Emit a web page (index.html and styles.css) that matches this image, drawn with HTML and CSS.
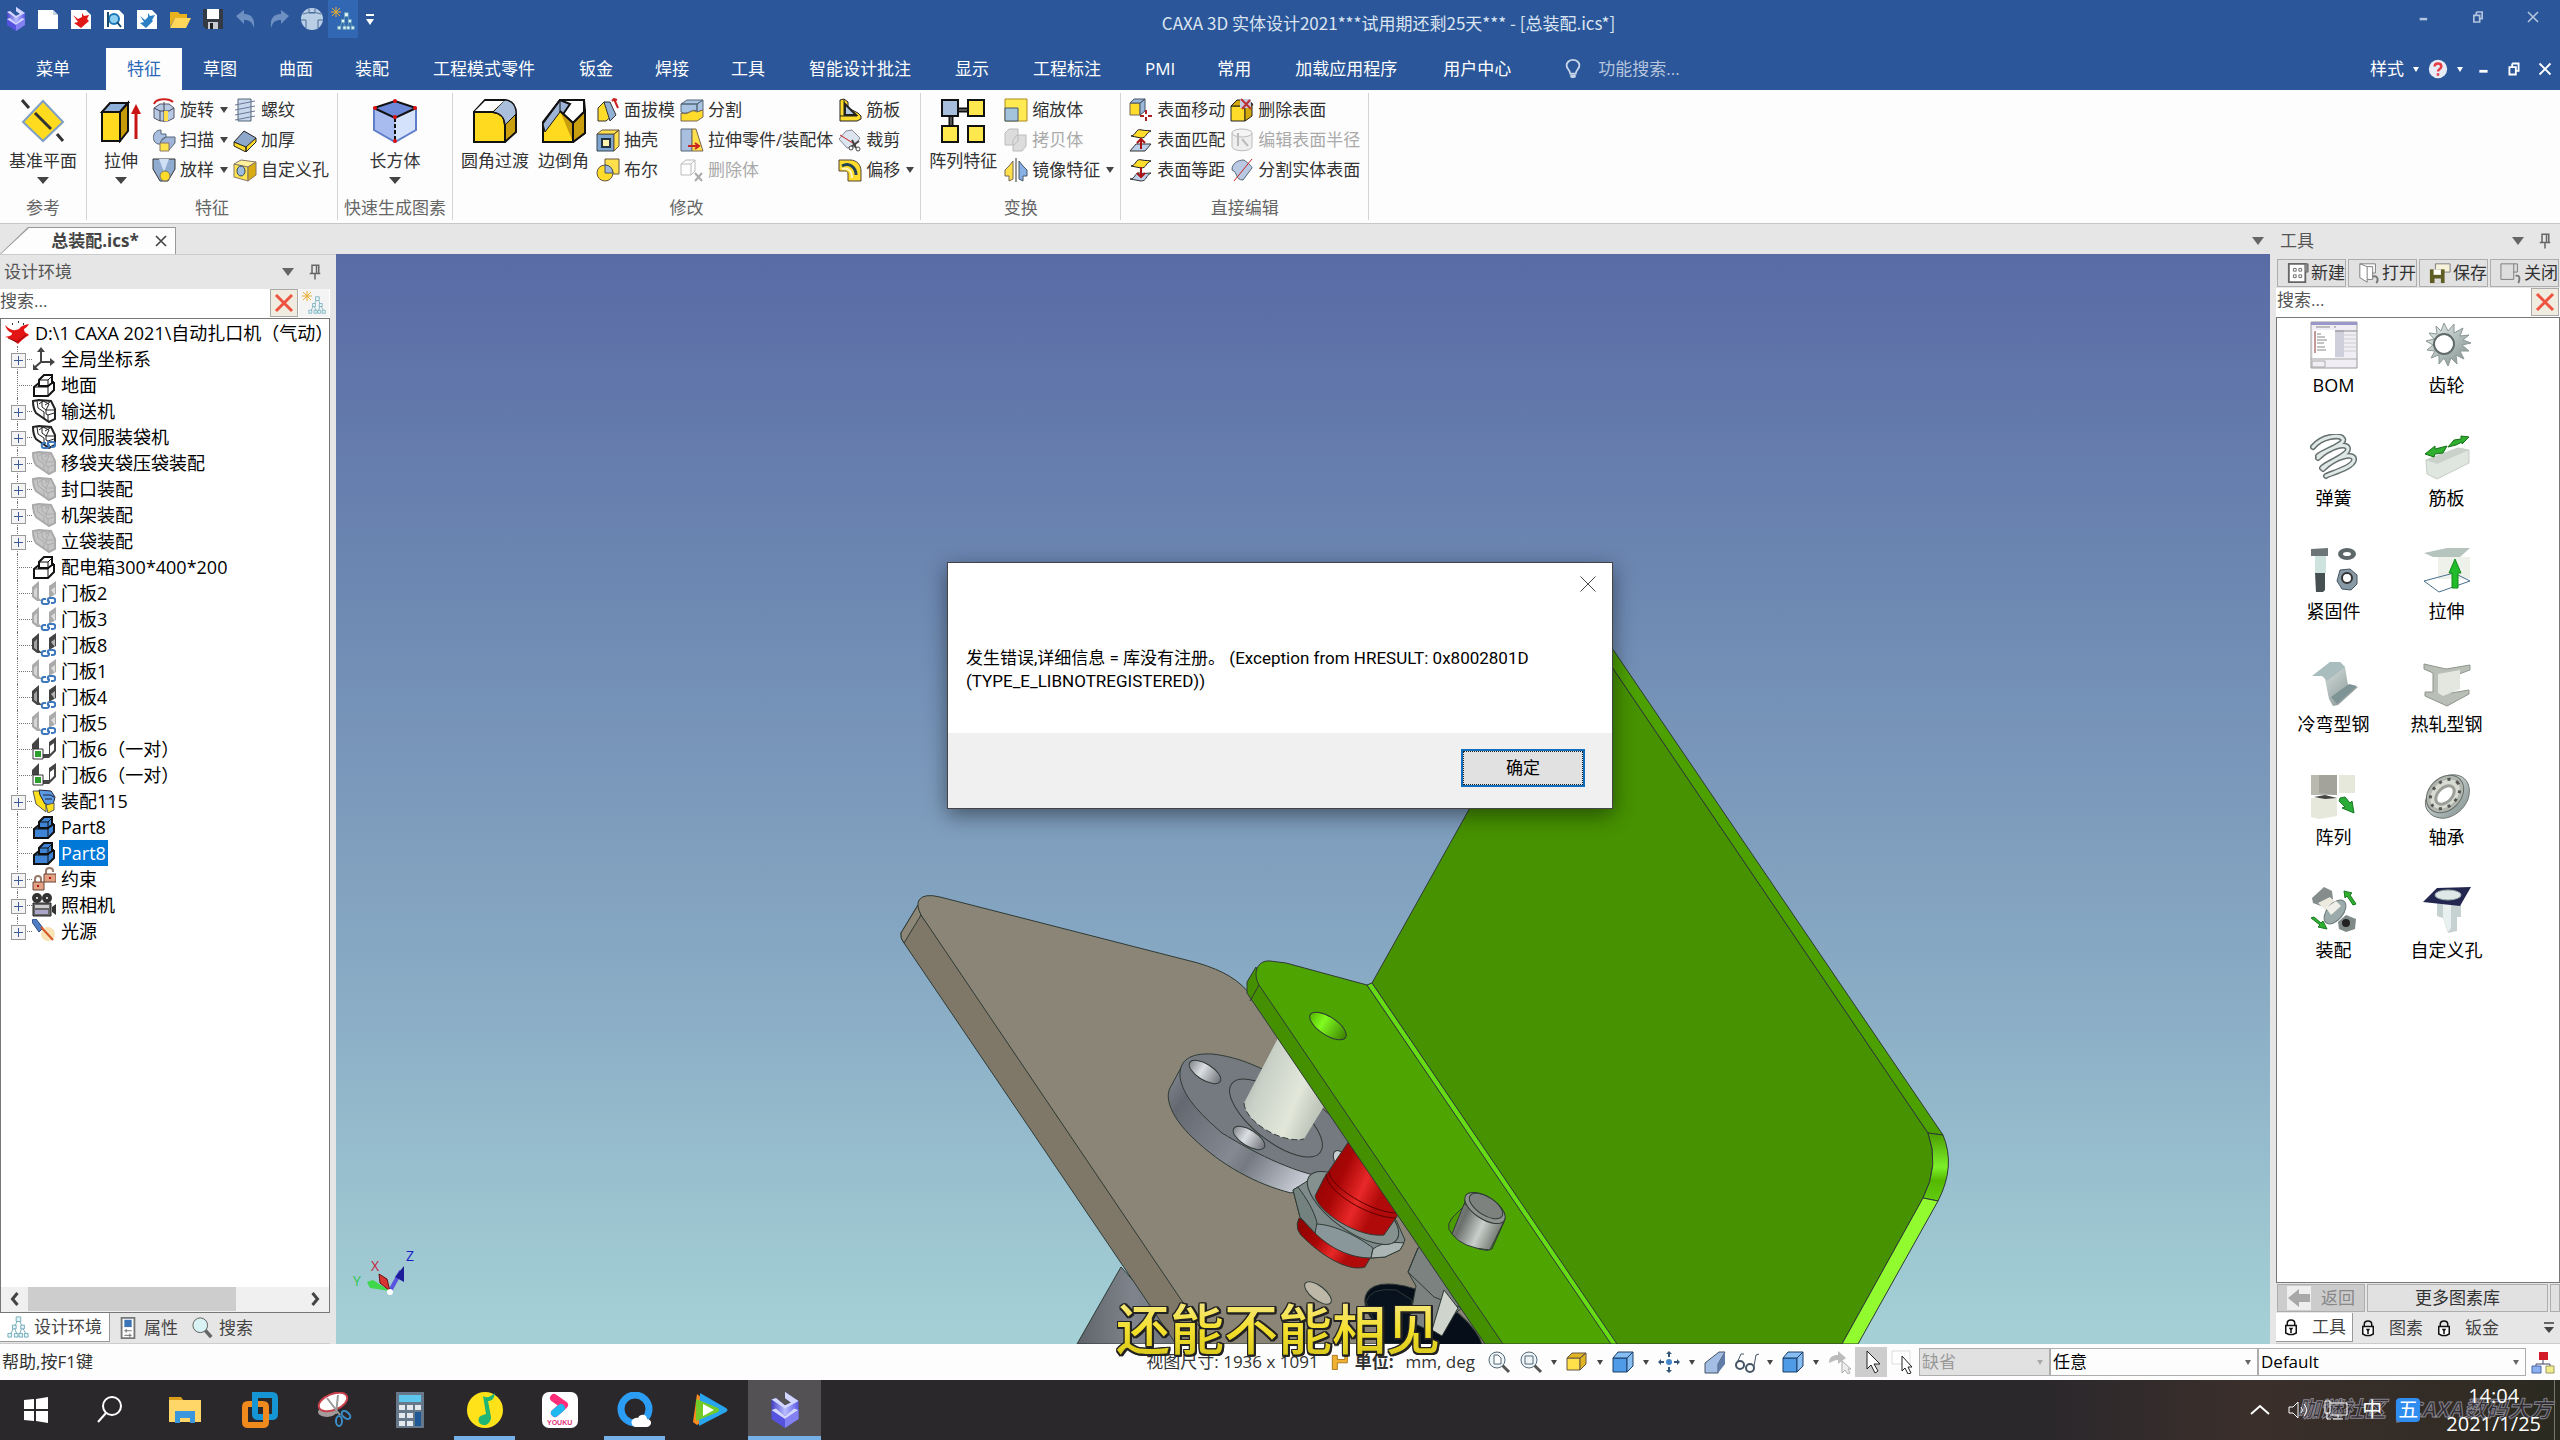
FILE: index.html
```html
<!DOCTYPE html>
<html lang="zh-CN">
  <head>
    <meta charset="UTF-8" />
    <meta name="viewport" content="width=device-width, initial-scale=1.0" />
    <title>CAXA 3D 实体设计2021</title>
    <link rel="stylesheet" href="styles.css">
  </head>
  <body>
    <!-- icon sprite -->
    <svg class="sprite" aria-hidden="true">
      <defs>
        <linearGradient id="steel" x1="0" y1="0" x2="1" y2="1"><stop offset="0" stop-color="#eef3f1"/><stop offset=".5" stop-color="#b4c0be"/><stop offset="1" stop-color="#7f8b8a"/></linearGradient>
        <linearGradient id="logoBlue" x1="0" y1="0" x2="1" y2="0"><stop offset="0" stop-color="#4340c8"/><stop offset=".5" stop-color="#b9bcff"/><stop offset="1" stop-color="#5a58e6"/></linearGradient>

        <symbol id="i-logo" viewBox="0 0 24 24"><path d="M3 5l3-1 6 5 4-2-4-3V0l9 6v6l-9 5-9-6z" fill="url(#logoBlue)"/><path d="M3 5l3-1 6 5 4-2-4-3V0l9 6-9 5z" fill="#d3d6ff"/><path d="M3 12l3-1 6 5 6-5 3 1v6l-9 6-9-6z" fill="#5552e0"/><path d="M3 12l3-1 6 5 6-5 3 1-9 6z" fill="#d3d6ff"/><path d="M12 18l9-6v6l-9 6z" fill="#8380f2"/></symbol>
        <symbol id="i-page" viewBox="0 0 24 24"><path d="M2 3h15l5 5v14H2z" fill="#fff"/><path d="M17 3v5h5" fill="#c9d4e4"/></symbol>
        <symbol id="i-page-red" viewBox="0 0 24 24"><path d="M2 3h15l5 5v14H2z" fill="#fff"/><path d="M4 8l5 4 4-2V6l2 3 5-1-2 4 2 2-8 7-7-5 4-1z" fill="#e01818"/></symbol>
        <symbol id="i-page-view" viewBox="0 0 24 24"><path d="M2 3h15l5 5v14H2z" fill="#fff"/><circle cx="12" cy="12" r="5" fill="#8fd0f0" stroke="#1c78b8" stroke-width="2"/><path d="M6 5v15M15 15l4 5" stroke="#18496e" stroke-width="2"/></symbol>
        <symbol id="i-page-blue" viewBox="0 0 24 24"><path d="M2 3h15l5 5v14H2z" fill="#fff"/><path d="M5 9l5 4 3-3V6l2 3 5-1-3 5 1 1-7 7-6-5 4-1z" fill="#2b7fc4"/></symbol>
        <symbol id="i-open" viewBox="0 0 24 24"><path d="M2 5h8l2 2h7v4H7l-5 9z" fill="#e8b21e"/><path d="M7 11h16l-5 10H2z" fill="#ffd75a"/></symbol>
        <symbol id="i-save" viewBox="0 0 24 24"><path d="M2 2h20v20H5l-3-3z" fill="#333a44"/><path d="M6 2h12v10H6z" fill="#fff"/><path d="M7 15h10v7H7z" fill="#c8ccd2"/><path d="M9 16h3v6H9z" fill="#222"/></symbol>
        <symbol id="i-undo" viewBox="0 0 24 24"><path d="M2 9l8-6v4c8 0 11 5 10 14-2-6-4-8-10-8v4z" fill="#6e8fc2"/></symbol>
        <symbol id="i-redo" viewBox="0 0 24 24"><path d="M22 9l-8-6v4C6 7 3 12 4 21c2-6 4-8 10-8v4z" fill="#6e8fc2"/></symbol>
        <symbol id="i-globe" viewBox="0 0 24 24"><circle cx="12" cy="12" r="11" fill="#b9cfe6"/><path d="M3 7c6-2 12-2 18 0M1 13h5v4M23 13h-5v4M6 17v4M18 17v4M9 2v4h6V2" fill="none" stroke="#4d6c94"/></symbol>
        <symbol id="i-nodes" viewBox="0 0 24 24"><path d="M12 4L8 12M13 4l4 8M7 13l-3 7M8 13l3 7M16 13l-2 7M17 13l4 7" stroke="#6fa9b8" fill="none"/><path d="M10 1h5v5h-5zM6 10h4v4H6zM15 10h4v4h-4zM1 19h4v4H1zM8 19h4v4H8zM13 19h4v4h-4zM19 19h4v4h-4z" fill="#e4f6f8" stroke="#6fa9b8"/></symbol>
        <symbol id="i-nodes-new" viewBox="0 0 24 24"><use href="#i-nodes" x="6" y="4" width="18" height="20"/><path d="M5 0v10M0 5h10M1 1l8 8M9 1L1 9" stroke="#e8ae30"/></symbol>
        <symbol id="i-min" viewBox="0 0 24 24"><path d="M8 13h9v3H8z" fill="currentColor"/></symbol>
        <symbol id="i-restore" viewBox="0 0 24 24"><path d="M10 6h7v8h-3M10 9V6M7 10h7v8H7z" fill="none" stroke="currentColor" stroke-width="2"/></symbol>
        <symbol id="i-x" viewBox="0 0 24 24"><path d="M6 6l12 12M18 6L6 18" stroke="currentColor" stroke-width="2"/></symbol>
        <symbol id="i-bulb" viewBox="0 0 24 24"><path d="M9 17c0-4-4-5-4-9a7 6 0 0 1 14 0c0 4-4 5-4 9z" fill="none" stroke="#c9d6ea" stroke-width="2"/><path d="M9 18h6v3l-3 1-3-1z" fill="#c9d6ea"/></symbol>
        <symbol id="i-help" viewBox="0 0 24 24"><circle cx="12" cy="12" r="11" fill="#e7ecf6"/><path d="M8 9c0-5 8-5 8 0 0 3-4 3-4 6m0 2v3" fill="none" stroke="#e63c46" stroke-width="3"/></symbol>

        <symbol id="i-plane" viewBox="0 0 44 44"><path d="M22 2l20 21-20 19L2 23z" fill="#ffdb20" stroke="#7f9fc4" stroke-width="2"/><path d="M1 1l7 8M14 14l16 16M36 35l6 7" stroke="#333" stroke-width="3"/></symbol>
        <symbol id="i-extrude" viewBox="0 0 44 44"><path d="M3 13h18v29H3z" fill="#ffda1f" stroke="#111" stroke-width="2"/><path d="M3 13l8-9h18l-8 9z" fill="#8fb0d8" stroke="#111" stroke-width="2"/><path d="M21 13l8-9v28l-8 10z" fill="#c79a08" stroke="#111" stroke-width="2"/><path d="M37 40V14" stroke="#c81414" stroke-width="3"/><path d="M32 15l5-10 5 10z" fill="#c81414"/></symbol>
        <symbol id="i-box3d" viewBox="0 0 44 44"><path d="M1 9l21 10v24L1 31z" fill="#a9bcf0"/><path d="M43 9L22 19v24l21-12z" fill="#d4e2fb"/><path d="M1 9l21-7 21 7-21 10z" fill="#6c8ad8" stroke="#111" stroke-width="2"/><path d="M1 9v22l21 12 21-12V9" fill="none" stroke="#5d7dc8" stroke-width="2"/><path d="M22 19v23" stroke="#111" stroke-width="2" stroke-dasharray="4 2"/><g fill="#e01010"><circle cx="2" cy="9" r="2"/><circle cx="42" cy="9" r="2"/><circle cx="22" cy="2" r="2"/><circle cx="22" cy="18" r="2"/><circle cx="22" cy="42" r="2"/></g></symbol>
        <symbol id="i-fillet" viewBox="0 0 44 44"><path d="M1 13h19c8 1 12 6 12 13v17H1z" fill="#ffda1f" stroke="#111" stroke-width="2"/><path d="M1 13L12 1h20c8 1 11 7 11 14v18L32 43V26c0-7-4-12-12-13z" fill="#c99f10" stroke="#111" stroke-width="2"/><path d="M20 13L32 1c8 1 11 7 11 14L32 26c0-7-4-12-12-13z" fill="#a9bfdc" stroke="#111"/><path d="M2 12L12 2h19L20 12z" fill="#fff"/></symbol>
        <symbol id="i-chamfer" viewBox="0 0 44 44"><path d="M1 23L18 1h24l1 11v22L31 43H1z" fill="#ffda1f" stroke="#111" stroke-width="2"/><path d="M18 1h24v12L31 24 18 12z" fill="#fff" stroke="#111" stroke-width="2"/><path d="M1 24L18 1l10 4-15 22-12 5z" fill="#9db4d6" stroke="#111" stroke-width="2"/><path d="M2 32l16-20 12 13v17H2z" fill="#ffda1f"/><path d="M1 25L18 2v11L3 33z" fill="#9db4d6" stroke="#111"/><path d="M18 12l13 12v19M31 24l12-12v22L31 43z" fill="#c99f10" stroke="#111" stroke-width="2"/></symbol>
        <symbol id="i-array" viewBox="0 0 44 44"><path d="M10 11h22M10 11v22" stroke="#111" stroke-width="5"/><path d="M10 11h22M10 11v22" stroke="#999" stroke-width="1"/><path d="M1 1h16v16H1z" fill="#a8bedd" stroke="#111" stroke-width="2"/><path d="M27 1h16v16H27zM1 27h16v16H1zM27 27h16v16H27z" fill="#ffe84e" stroke="#111" stroke-width="2"/></symbol>

        <symbol id="i-revolve" viewBox="0 0 24 24"><path d="M2 10l6-4h9l5 4v10l-6 3H8l-6-3z" fill="#b8c9e4" stroke="#556"/><path d="M2 10l6 3h9l5-3M8 13v10M12 4v20" fill="none" stroke="#445"/><path d="M12 13v10h4V13z" fill="#ffe04a"/><path d="M2 6c2-6 15-6 19-2" fill="none" stroke="#c22" stroke-width="2"/></symbol>
        <symbol id="i-sweep" viewBox="0 0 24 24"><path d="M9 2C0 2-1 14 6 16h4v-5l4-2v-3H9z" fill="#a8bfdf" stroke="#567"/><path d="M8 14l6-5h9v6l-6 7z" fill="#9fb4d8" stroke="#567"/><path d="M8 15h9v8H8z" fill="#ffe34d" stroke="#876"/></symbol>
        <symbol id="i-loft" viewBox="0 0 24 24"><path d="M1 1h22v10l-7 12H8L1 11z" fill="#8fabd0" stroke="#333"/><path d="M7 1h10l-5 13z" fill="#cfe0f4"/><circle cx="13" cy="18" r="5" fill="#ffdc2a" stroke="#776"/></symbol>
        <symbol id="i-thread" viewBox="0 0 24 24"><path d="M5 1h13v22H5z" fill="#c8d6ec" stroke="#567"/><path d="M2 7l20-4M2 12l20-4M2 17l20-4M2 22l20-4" stroke="#6a7896"/></symbol>
        <symbol id="i-thicken" viewBox="0 0 24 24"><path d="M1 14L11 3l12 7-10 10z" fill="#8ea8cc" stroke="#222"/><path d="M1 14v4l12 6v-5zM13 19v5l10-10v-4z" fill="#ffdc2a" stroke="#222"/></symbol>
        <symbol id="i-hole" viewBox="0 0 24 24"><path d="M1 6l14 3v14L1 19z" fill="#ffe450" stroke="#876"/><path d="M1 6l7-4 15 2-8 5z" fill="#fff09a" stroke="#876"/><path d="M15 9l8-5v13l-8 6z" fill="#d8ac10" stroke="#876"/><ellipse cx="8" cy="13" rx="4" ry="5" fill="#9dbce0" stroke="#345"/></symbol>
        <symbol id="i-draft" viewBox="0 0 24 24"><path d="M2 10l6-6 4 1 5 12-7 6H2z" fill="#ffdc2a" stroke="#333"/><path d="M8 4h6l6 13-6 6z" fill="#92b0d4" stroke="#333"/><path d="M18 1l4 9M16 3l2-2 3 1" fill="none" stroke="#c22" stroke-width="2"/></symbol>
        <symbol id="i-shell" viewBox="0 0 24 24"><path d="M1 6h17v17H1z" fill="#7fa6cf" stroke="#345"/><path d="M1 6l5-4h17l-5 4zM18 6l5-4v16l-5 5z" fill="#ffe04a" stroke="#654"/><path d="M6 11h8v8H6z" fill="#fff3b0" stroke="#234" stroke-width="2"/></symbol>
        <symbol id="i-bool" viewBox="0 0 24 24"><path d="M9 1h14v15H9z" fill="#ffe04a" stroke="#654"/><circle cx="9" cy="15" r="8" fill="#ffdc2a" stroke="#654"/><path d="M9 7a8 8 0 0 1 8 8H9z" fill="#a0b6da" stroke="#456"/></symbol>
        <symbol id="i-split" viewBox="0 0 24 24"><path d="M1 6l6-4h16l-6 4zM1 6h16v7c-6-3-8 5-16 1zM17 6l6-4v10l-6 2z" fill="#a9c3e2" stroke="#567"/><path d="M1 15c8 3 10-5 16-1l6-2v7l-6 4H1z" fill="#ffdc2a" stroke="#765"/></symbol>
        <symbol id="i-stretch" viewBox="0 0 24 24"><path d="M1 1h11v22H1z" fill="#a8bfdf" stroke="#567"/><path d="M12 1h4l7 22H12z" fill="#ffe04a" stroke="#765"/><path d="M8 18h10m-3-3l4 3-4 3" fill="none" stroke="#c22" stroke-width="2"/></symbol>
        <symbol id="i-delbody" viewBox="0 0 24 24"><path d="M1 6l5-4h9v11l-4 4H1zM1 6h10l4-4M11 6v11" fill="none" stroke="#bbb"/><path d="M15 15l7 8M22 15l-7 8" stroke="#aaa" stroke-width="2"/></symbol>
        <symbol id="i-rib" viewBox="0 0 24 24"><path d="M2 2l4-1 4 3v6l10 5 3 3v3l-4 2H2z" fill="#ffdc2a" stroke="#222"/><path d="M7 6l11 11H7z" fill="#b4c8e0" stroke="#222" stroke-width="2"/><path d="M2 18h17M6 2v16" fill="none" stroke="#222"/></symbol>
        <symbol id="i-trim" viewBox="0 0 24 24"><path d="M1 11l7-8 6-1 8 8-6 9-7 1z" fill="#dce4f0" stroke="#889"/><path d="M2 7l16 10" stroke="#c22"/><path d="M14 12l4 8M21 13l-8 6" stroke="#444" stroke-width="2"/><circle cx="13" cy="20" r="2" fill="#fff" stroke="#444"/><circle cx="20" cy="21" r="2" fill="#fff" stroke="#444"/></symbol>
        <symbol id="i-offset" viewBox="0 0 24 24"><path d="M1 2h11c7 0 11 5 11 11v10H10v-7c0-3-2-3-4-3H1z" fill="#ffdc2a" stroke="#543"/><path d="M4 8c7-4 14 1 14 9" fill="none" stroke="#245" stroke-width="3"/><path d="M4 11c6-2 10 2 10 9" fill="none" stroke="#fff6c0" stroke-width="2"/></symbol>
        <symbol id="i-scale" viewBox="0 0 24 24"><path d="M1 1h22v22H1z" fill="#ffea52" stroke="#aa8a20"/><path d="M1 10h13v13H1z" fill="#a4c4dc" stroke="#456"/></symbol>
        <symbol id="i-copybody" viewBox="0 0 24 24"><path d="M1 5l4-4h9v12l-4 4H1zM9 12l4-5h9v11l-4 5H9z" fill="#dcdcdc" stroke="#bbb"/></symbol>
        <symbol id="i-mirror" viewBox="0 0 24 24"><path d="M9 3v18l-4 2v-5H1v-6l4-4z" fill="#ffe04a" stroke="#765"/><path d="M15 3v18l4 2v-5h4v-6l-4-4z" fill="#88b0e4" stroke="#456"/><path d="M12 0v24" stroke="#333"/></symbol>
        <symbol id="i-fmove" viewBox="0 0 24 24"><path d="M1 5h10v12H1z" fill="#ffdc2a" stroke="#765"/><path d="M1 5l4-4h11l-5 4zM11 5l5-4v12l-5 4z" fill="#9bb8da" stroke="#456"/><path d="M17 12v4m0 3v4m-6-5h4m4 0h4" stroke="#a22" stroke-width="2"/></symbol>
        <symbol id="i-fmatch" viewBox="0 0 24 24"><path d="M2 8c6-1 4-8 11-6 4 1 7 0 9 1-6 2-4 7-10 7z" fill="#ffdc2a" stroke="#222"/><path d="M1 23l6-7h15l-6 7z" fill="#bccfea" stroke="#333"/><path d="M12 21v-9m-4 3l4-4 4 4" fill="none" stroke="#a11" stroke-width="2"/></symbol>
        <symbol id="i-foffset" viewBox="0 0 24 24"><path d="M2 8c6-1 4-8 11-6 4 1 7 0 9 1-6 2-4 7-10 7z" fill="#ffdc2a" stroke="#222"/><path d="M1 21c6 0 4-7 10-6 4 1 8 0 11 0-6 3-4 8-10 8z" fill="#bccfea" stroke="#333"/><path d="M12 9v9m-4-3l4 4 4-4" fill="none" stroke="#a11" stroke-width="2"/></symbol>
        <symbol id="i-fdel" viewBox="0 0 24 24"><path d="M1 8h14v15H1z" fill="#ffdc2a" stroke="#222"/><path d="M1 8l6-6h12l4 5-8 1zM15 8l7-3v13l-7 5z" fill="#d3a90c" stroke="#222"/><path d="M10 1h11v9H10z" fill="#c6cbe4"/><path d="M11 1l10 10M20 2l-8 9" stroke="#b33" stroke-width="2"/></symbol>
        <symbol id="i-fradius" viewBox="0 0 24 24"><path d="M2 5v14c2 5 18 5 20 0V5" fill="#eee" stroke="#bbb"/><ellipse cx="12" cy="5" rx="10" ry="4" fill="#f4f4f4" stroke="#bbb"/><path d="M8 5v13m4-7l6 7" stroke="#bbb" stroke-width="2"/></symbol>
        <symbol id="i-fsplit" viewBox="0 0 24 24"><path d="M2 12C2 5 8 2 14 2c5 4 8 6 8 8l-9 12C5 22 8 14 2 12z" fill="#b9c9e4" stroke="#567"/><path d="M22 1L4 23" stroke="#c22"/></symbol>

        <symbol id="t-root" viewBox="0 0 24 24"><path d="M0 4c6 6 10 6 14 4 2-3 5-4 10-5-2 4-5 4-5 6 1 4 4 3 5 5-5 3-8 6-11 9C9 20 4 16 0 16c6-1 7-2 7-4C4 11 1 8 0 4z" fill="#e31414"/><path d="M3 17l9 4 9-7" fill="none" stroke="#8c0c0c"/><path d="M7 3h1M13 1h1M18 3h1" stroke="#333" stroke-width="2"/></symbol>
        <symbol id="t-axis" viewBox="0 0 24 24"><path d="M9 3v12h12M9 15l-7 6" fill="none" stroke="#444" stroke-width="2"/><path d="M5 5l4-5 4 5zM18 11l5 4-5 4zM1 17v6h6z" fill="#444"/></symbol>
        <symbol id="t-part" viewBox="0 0 24 24"><path d="M2 14l5-4h15v7l-6 6H2z" fill="var(--fill,#fff)" stroke="#111" stroke-width="2"/><path d="M2 14h14v9M16 14l6-6" fill="none" stroke="#111"/><path d="M7 12V7l5-5h8v8l-4 3H7z" fill="var(--fill,#fff)" stroke="#111" stroke-width="2"/><path d="M7 7h9v6M16 7l4-4" fill="none" stroke="#111"/></symbol>
        <symbol id="t-asm" viewBox="0 0 24 24"><path d="M1 2l6-1 12 1 4 8v10l-6 3L4 14C2 11 1 8 1 2z" fill="var(--fill,#fff)" stroke="var(--line,#222)" stroke-width="2"/><path d="M5 2l1 7 6 4v6M10 2v6l4 3M7 5l4-3 6 3-3 6v4l2 1v6M14 11h8M13 6l5-3M16 16l6-2" fill="none" stroke="var(--line,#222)"/></symbol>
        <symbol id="t-asm-color" viewBox="0 0 24 24"><path d="M1 2h7l6 12v9L4 15z" fill="#ffe01e" stroke="#555"/><path d="M7 1l12 1 4 6-2 8-8-1-5-9z" fill="#5b9be6" stroke="#223"/><path d="M11 6h7l4 2M13 10h7" stroke="#223" fill="none"/><path d="M14 16l8-2v7l-6 3z" fill="#ffe01e" stroke="#555"/></symbol>
        <symbol id="t-link" viewBox="0 0 24 24"><path d="M14 18h-2c-3 0-3 5 0 5h3c3 0 2-4 0-4m4 3h2c3 0 3-5 0-5h-3c-3 0-3 4 0 4" fill="none" stroke="#3d78bd" stroke-width="2"/></symbol>
        <symbol id="t-door" viewBox="0 0 24 24"><path d="M0 6l7-6v17l3 3H5l-5-4z" fill="var(--fill,#aaa)"/><path d="M2 9l3-3v11l-3-2z" fill="#fff" opacity=".5"/><path d="M17 5l7-5v13l-7 4z" fill="var(--fill,#aaa)"/><path d="M19 9l4-3v8z" fill="#fff" opacity=".6"/></symbol>
        <symbol id="t-door6" viewBox="0 0 24 24"><path d="M0 7l7-7v12H0zM17 5l7-5v14l-7 7h-6v-4h6z" fill="#444"/><path d="M18 9l4-3v7l-4 4z" fill="#fff"/><path d="M1 12h10v10H1z" fill="#fff" stroke="#333"/><path d="M3 14h6v6H3z" fill="#2aa02a"/></symbol>
        <symbol id="t-lock" viewBox="0 0 24 24"><path d="M3 15v-3c0-4 6-4 6 0v3M14 7V4c0-4 7-4 7 0v1" fill="none" stroke="#9a7a6a" stroke-width="2"/><path d="M1 15h11v8H1zM12 7h12v8H12z" fill="#e2a182" stroke="#6a4436"/><path d="M6 18v2M18 10v2" stroke="#a11" stroke-width="2"/></symbol>
        <symbol id="t-cam" viewBox="0 0 24 24"><circle cx="5" cy="5" r="5" fill="#333"/><circle cx="15" cy="5" r="5" fill="#333"/><circle cx="5" cy="5" r="1" fill="#fff"/><circle cx="15" cy="5" r="1" fill="#fff"/><path d="M1 10h18v13H1z" fill="#666" stroke="#222"/><path d="M3 12h14v3H3z" fill="#ccc"/><path d="M3 17h13v4H3z" fill="#a9a6c8"/><path d="M20 14l4-3v11l-4-3z" fill="#333"/></symbol>
        <symbol id="t-light" viewBox="0 0 24 24"><path d="M1 0l3 0 7 9-4 4L0 3z" fill="#4d7ec6" stroke="#2c4a80"/><circle cx="16" cy="15" r="7" fill="#f7e3b6"/><path d="M9 8l12 13" stroke="#d4572c" stroke-width="2"/></symbol>

        <symbol id="i-pin" viewBox="0 0 24 24"><path d="M8 3h9v11H8zM5 14h14M12 14v8M14 4v9" fill="none" stroke="#666" stroke-width="2"/></symbol>
        <symbol id="i-prop" viewBox="0 0 24 24"><path d="M5 1h14v22H5z" fill="#fff" stroke="#777" stroke-width="2"/><path d="M8 3h8v8H8z" fill="#3c74b8"/><path d="M8 15h8m-8 5h8m-6-7v4m4 1v4" stroke="#666"/></symbol>
        <symbol id="i-find" viewBox="0 0 24 24"><path d="M14 14l7 8" stroke="#666" stroke-width="4"/><circle cx="9" cy="9" r="8" fill="#d9f3f5" stroke="#555"/></symbol>
        <symbol id="i-redx" viewBox="0 0 24 24"><path d="M4 4l16 16M20 4L4 20" stroke="#ee5340" stroke-width="3"/></symbol>
        <symbol id="i-padlock" viewBox="0 0 24 24"><path d="M7 11V7c0-6 10-6 10 0v4" fill="none" stroke="#111" stroke-width="2"/><path d="M5 10h14v10l-4 2H9l-4-2z" fill="#fff" stroke="#111" stroke-width="2"/><path d="M9 13h6l-2 3v4h-2v-4z" fill="#111"/></symbol>
        <symbol id="i-back" viewBox="0 0 24 24"><path d="M0 0h24v24H0z" fill="#eee"/><path d="M1 12L12 3v5h11v8H12v5z" fill="#a8a8a8"/></symbol>
        <symbol id="b-new" viewBox="0 0 24 24"><path d="M2 2h18v20H2z" fill="#fff" stroke="#666" stroke-width="2"/><path d="M19 2h4v9h-3" fill="#888" stroke="#666"/><path d="M7 7h3v3H7zM13 7h3v3h-3zM7 14h3v3H7zM13 14h3v3h-3z" fill="none" stroke="#666"/></symbol>
        <symbol id="b-open" viewBox="0 0 24 24"><path d="M2 2l8 3v17l-8-5zM10 5h6v14h-6M2 2h17v10h-3" fill="#fff" stroke="#777"/><path d="M16 16c5-2 7 3 4 7" fill="none" stroke="#777" stroke-width="2"/></symbol>
        <symbol id="b-save" viewBox="0 0 24 24"><path d="M7 2h16v9H7z" fill="#f6f3dc" stroke="#777"/><path d="M1 8h16v15H1z" fill="#5d5d24"/><path d="M5 8h8v6H5z" fill="#fff"/><path d="M6 18h7v5H6z" fill="#ddd"/></symbol>
        <symbol id="b-close" viewBox="0 0 24 24"><path d="M1 2h14v17H1zM15 2h4v9h-4" fill="#ddd" stroke="#777"/><path d="M17 15c5-1 5 3 3 8" fill="none" stroke="#777" stroke-width="2"/></symbol>

        <symbol id="s-ruler" viewBox="0 0 24 24"><path d="M4 4h6v5h9V4h3v9H10v8H4z" fill="#f0b030" stroke="#a06a10"/></symbol>
        <symbol id="s-zoom" viewBox="0 0 24 24"><path d="M15 15l7 7" stroke="#555" stroke-width="3"/><circle cx="10" cy="10" r="8" fill="#eef6f8" stroke="#567"/><path d="M7 5h4l3 3v6H7z" fill="#fff" stroke="#567"/></symbol>
        <symbol id="s-zoom-win" viewBox="0 0 24 24"><path d="M15 15l7 7" stroke="#555" stroke-width="3"/><circle cx="10" cy="10" r="8" fill="#eef6f8" stroke="#567"/><path d="M6 6h8v8H6z" fill="none" stroke="#567"/></symbol>
        <symbol id="s-cube-y" viewBox="0 0 24 24"><path d="M2 8h13v12H2z" fill="#ffe04a" stroke="#654"/><path d="M2 8l5-5h14l-6 5zM15 8l6-5v11l-6 6z" fill="#e0b423" stroke="#654"/></symbol>
        <symbol id="s-cube" viewBox="0 0 24 24"><path d="M2 8h14v14H2z" fill="#4f9be8" stroke="#1c3d66"/><path d="M2 8l5-6h15l-6 6zM16 8l6-6v14l-6 6z" fill="#86bdf2" stroke="#1c3d66"/></symbol>
        <symbol id="s-move" viewBox="0 0 24 24"><circle cx="12" cy="12" r="3" fill="#4488cc"/><path d="M12 4v3M4 12h3M17 12h3M12 17v3" stroke="#357" stroke-width="2"/><path d="M9 4l3-3 3 3zM9 20l3 3 3-3zM4 9l-3 3 3 3zM20 9l3 3-3 3z" fill="#357"/></symbol>
        <symbol id="s-wedge" viewBox="0 0 24 24"><path d="M2 13L16 2h6L15 14v9H2z" fill="#a3bde4" stroke="#456"/><path d="M15 14l7-12v12l-7 9z" fill="#5f7ca8"/></symbol>
        <symbol id="s-glass" viewBox="0 0 24 24"><circle cx="5" cy="15" r="4" fill="none" stroke="#456" stroke-width="2"/><circle cx="15" cy="18" r="4" fill="none" stroke="#456" stroke-width="2"/><path d="M2 13L6 4l3 0M19 16l2-11 3-1" fill="none" stroke="#456"/></symbol>
        <symbol id="s-rot" viewBox="0 0 24 24"><path d="M2 13c0-7 5-8 9-8V1l8 7-8 6v-4c-4 0-6 2-9 3z" fill="#bbb"/><path d="M15 11v12l3-3 3 4 2-1-2-4h3z" fill="#eee" stroke="#aaa"/></symbol>
        <symbol id="s-arrow" viewBox="0 0 24 24"><path d="M8 1v18l4-4 4 8 3-2-4-7h6z" fill="#fff" stroke="#222"/></symbol>
        <symbol id="s-pick" viewBox="0 0 24 24"><path d="M1 1h18v13H1z" fill="#fff" stroke="#ddd"/><path d="M11 6v15l3-3 3 6 3-1-3-6h4z" fill="#fff" stroke="#222"/></symbol>
        <symbol id="s-tree" viewBox="0 0 24 24"><path d="M12 10v4M5 17v-3h14v3" fill="none" stroke="#446"/><path d="M8 2h9v8H8z" fill="#d21a28"/><path d="M1 16h9v7H1z" fill="#8fb0ee" stroke="#46a"/><path d="M15 16h8v7h-8z" fill="#f2ec8a" stroke="#996"/></symbol>
      </defs>
    </svg>

    <header class="titlebar">
      <div class="quick">
        <button class="app-logo" aria-label="CAXA"><svg class="i24"><use href="#i-logo"/></svg></button>
        <button aria-label="新建"><svg class="i24"><use href="#i-page"/></svg></button>
        <button aria-label="新建设计"><svg class="i24"><use href="#i-page-red"/></svg></button>
        <button aria-label="新建图纸"><svg class="i24"><use href="#i-page-view"/></svg></button>
        <button aria-label="模板"><svg class="i24"><use href="#i-page-blue"/></svg></button>
        <button aria-label="打开"><svg class="i24"><use href="#i-open"/></svg></button>
        <button aria-label="保存"><svg class="i24"><use href="#i-save"/></svg></button>
        <button aria-label="撤销"><svg class="i24"><use href="#i-undo"/></svg></button>
        <button aria-label="重做"><svg class="i24"><use href="#i-redo"/></svg></button>
        <button aria-label="三维球"><svg class="i24"><use href="#i-globe"/></svg></button>
        <button class="lit" aria-label="设计树"><svg class="i24"><use href="#i-nodes-new"/></svg></button>
        <button class="more" aria-label="更多"><i class="bar"></i><i class="tri"></i></button>
      </div>
      <h1>CAXA 3D 实体设计2021***试用期还剩25天*** - [总装配.ics*]</h1>
      <div class="win-ctl">
        <button aria-label="最小化"><svg class="i24"><use href="#i-min"/></svg></button>
        <button aria-label="还原"><svg class="i24"><use href="#i-restore"/></svg></button>
        <button aria-label="关闭"><svg class="i24"><use href="#i-x"/></svg></button>
      </div>
    </header>

    <nav class="tabs">
      <button class="menu">菜单</button>
      <button class="active">特征</button>
      <button>草图</button>
      <button>曲面</button>
      <button>装配</button>
      <button class="long">工程模式零件</button>
      <button>钣金</button>
      <button>焊接</button>
      <button>工具</button>
      <button class="long">智能设计批注</button>
      <button>显示</button>
      <button class="long">工程标注</button>
      <button>PMI</button>
      <button>常用</button>
      <button class="long">加载应用程序</button>
      <button class="long">用户中心</button>
      <label class="cmd-search"><svg class="i22"><use href="#i-bulb"/></svg><input type="text" placeholder="功能搜索..." aria-label="功能搜索" /></label>
      <div class="tabs-right">
        <button>样式<i class="tri"></i></button>
        <button aria-label="帮助"><svg class="i20"><use href="#i-help"/></svg><i class="tri"></i></button>
        <button aria-label="最小化文档"><svg class="i24"><use href="#i-min"/></svg></button>
        <button aria-label="还原文档"><svg class="i24"><use href="#i-restore"/></svg></button>
        <button aria-label="关闭文档"><svg class="i24"><use href="#i-x"/></svg></button>
      </div>
    </nav>

    <section class="ribbon">
      <div class="group first">
        <div class="tools">
          <button class="big"><svg><use href="#i-plane"/></svg>基准平面<i class="tri"></i></button>
        </div>
        <h2>参考</h2>
      </div>
      <div class="group wide">
        <div class="tools">
          <button class="big"><svg><use href="#i-extrude"/></svg>拉伸<i class="tri"></i></button>
          <div class="col">
            <button><svg><use href="#i-revolve"/></svg>旋转<i class="tri"></i></button>
            <button><svg><use href="#i-sweep"/></svg>扫描<i class="tri"></i></button>
            <button><svg><use href="#i-loft"/></svg>放样<i class="tri"></i></button>
          </div>
          <div class="col">
            <button><svg><use href="#i-thread"/></svg>螺纹</button>
            <button><svg><use href="#i-thicken"/></svg>加厚</button>
            <button><svg><use href="#i-hole"/></svg>自定义孔</button>
          </div>
        </div>
        <h2>特征</h2>
      </div>
      <div class="group">
        <div class="tools">
          <button class="big"><svg><use href="#i-box3d"/></svg>长方体<i class="tri"></i></button>
        </div>
        <h2>快速生成图素</h2>
      </div>
      <div class="group">
        <div class="tools">
          <button class="big"><svg><use href="#i-fillet"/></svg>圆角过渡</button>
          <button class="big"><svg><use href="#i-chamfer"/></svg>边倒角</button>
          <div class="col">
            <button><svg><use href="#i-draft"/></svg>面拔模</button>
            <button><svg><use href="#i-shell"/></svg>抽壳</button>
            <button><svg><use href="#i-bool"/></svg>布尔</button>
          </div>
          <div class="col">
            <button><svg><use href="#i-split"/></svg>分割</button>
            <button><svg><use href="#i-stretch"/></svg>拉伸零件/装配体</button>
            <button disabled><svg><use href="#i-delbody"/></svg>删除体</button>
          </div>
          <div class="col">
            <button><svg><use href="#i-rib"/></svg>筋板</button>
            <button><svg><use href="#i-trim"/></svg>裁剪</button>
            <button><svg><use href="#i-offset"/></svg>偏移<i class="tri"></i></button>
          </div>
        </div>
        <h2>修改</h2>
      </div>
      <div class="group">
        <div class="tools">
          <button class="big"><svg><use href="#i-array"/></svg>阵列特征</button>
          <div class="col">
            <button><svg><use href="#i-scale"/></svg>缩放体</button>
            <button disabled><svg><use href="#i-copybody"/></svg>拷贝体</button>
            <button><svg><use href="#i-mirror"/></svg>镜像特征<i class="tri"></i></button>
          </div>
        </div>
        <h2>变换</h2>
      </div>
      <div class="group wide">
        <div class="tools">
          <div class="col">
            <button><svg><use href="#i-fmove"/></svg>表面移动</button>
            <button><svg><use href="#i-fmatch"/></svg>表面匹配</button>
            <button><svg><use href="#i-foffset"/></svg>表面等距</button>
          </div>
          <div class="col">
            <button><svg><use href="#i-fdel"/></svg>删除表面</button>
            <button disabled><svg><use href="#i-fradius"/></svg>编辑表面半径</button>
            <button><svg><use href="#i-fsplit"/></svg>分割实体表面</button>
          </div>
        </div>
        <h2>直接编辑</h2>
      </div>
    </section>

    <main class="work">
      <div class="docs">
        <div class="doc-tabs">
          <button class="doc-tab"><b>总装配.ics*</b><svg class="i20"><use href="#i-x"/></svg></button>
          <button class="doc-list" aria-label="文档列表"><i class="tri"></i></button>
        </div>

        <div class="doc-body">
          <aside class="panel left">
            <div class="panel-head">设计环境<i class="tri"></i><svg class="i18"><use href="#i-pin"/></svg></div>
            <div class="search">
              <input type="text" placeholder="搜索..." aria-label="搜索设计树" />
              <button class="clear" aria-label="清除"><svg class="i24"><use href="#i-redx"/></svg></button>
              <button class="opt" aria-label="过滤"><svg class="i24"><use href="#i-nodes-new"/></svg></button>
            </div>
            <div class="tree-box">
              <div class="root"><svg class="i24"><use href="#t-root"/></svg>D:\1 CAXA 2021\自动扎口机（气动）</div>
              <ul class="tree">
                <li class="exp"><svg class="i24"><use href="#t-axis"/></svg><span>全局坐标系</span></li>
                <li><svg class="i24"><use href="#t-part"/></svg><span>地面</span></li>
                <li class="exp"><svg class="i24"><use href="#t-asm"/></svg><span>输送机</span></li>
                <li class="exp"><svg class="i24"><use href="#t-asm"/><use href="#t-link"/></svg><span>双伺服装袋机</span></li>
                <li class="exp"><svg class="i24 dim"><use href="#t-asm"/></svg><span>移袋夹袋压袋装配</span></li>
                <li class="exp"><svg class="i24 dim"><use href="#t-asm"/></svg><span>封口装配</span></li>
                <li class="exp"><svg class="i24 dim"><use href="#t-asm"/></svg><span>机架装配</span></li>
                <li class="exp"><svg class="i24 dim"><use href="#t-asm"/></svg><span>立袋装配</span></li>
                <li><svg class="i24"><use href="#t-part"/></svg><span>配电箱300*400*200</span></li>
                <li><svg class="i24"><use href="#t-door"/><use href="#t-link"/></svg><span>门板2</span></li>
                <li><svg class="i24"><use href="#t-door"/><use href="#t-link"/></svg><span>门板3</span></li>
                <li><svg class="i24 dark"><use href="#t-door"/><use href="#t-link"/></svg><span>门板8</span></li>
                <li><svg class="i24"><use href="#t-door"/><use href="#t-link"/></svg><span>门板1</span></li>
                <li><svg class="i24 dark"><use href="#t-door"/><use href="#t-link"/></svg><span>门板4</span></li>
                <li><svg class="i24"><use href="#t-door"/><use href="#t-link"/></svg><span>门板5</span></li>
                <li><svg class="i24"><use href="#t-door6"/></svg><span>门板6（一对）</span></li>
                <li><svg class="i24"><use href="#t-door6"/></svg><span>门板6（一对）</span></li>
                <li class="exp"><svg class="i24"><use href="#t-asm-color"/></svg><span>装配115</span></li>
                <li><svg class="i24 blue"><use href="#t-part"/></svg><span>Part8</span></li>
                <li class="selected"><svg class="i24 blue"><use href="#t-part"/></svg><span>Part8</span></li>
                <li class="exp"><svg class="i24"><use href="#t-lock"/></svg><span>约束</span></li>
                <li class="exp"><svg class="i24"><use href="#t-cam"/></svg><span>照相机</span></li>
                <li class="exp"><svg class="i24"><use href="#t-light"/></svg><span>光源</span></li>
              </ul>
              <div class="hscroll">
                <svg viewBox="0 0 24 24"><path d="M15 6l-5 6 5 6" fill="none" stroke="#444" stroke-width="3"/></svg>
                <div class="track"><div class="thumb"></div></div>
                <svg viewBox="0 0 24 24"><path d="M9 6l5 6-5 6" fill="none" stroke="#444" stroke-width="3"/></svg>
              </div>
            </div>
            <div class="panel-tabs">
              <button class="active"><svg class="i22"><use href="#i-nodes"/></svg>设计环境</button>
              <button><svg class="i22"><use href="#i-prop"/></svg>属性</button>
              <button><svg class="i22"><use href="#i-find"/></svg>搜索</button>
            </div>
          </aside>

          <div class="viewport">
            <svg class="scene" viewBox="336 254 1934 1090" preserveAspectRatio="xMinYMin slice">
              <defs>
                <linearGradient id="rod" x1="0" y1="0" x2="1" y2=".5"><stop offset="0" stop-color="#9aa19c"/><stop offset=".35" stop-color="#c9d0c6"/><stop offset=".75" stop-color="#e2e7da"/><stop offset="1" stop-color="#c0c6ba"/></linearGradient>
                <linearGradient id="rim" x1="0" y1="0" x2="1" y2=".6"><stop offset="0" stop-color="#8b9098"/><stop offset=".2" stop-color="#646971"/><stop offset=".6" stop-color="#858a92"/><stop offset=".7" stop-color="#747982"/><stop offset="1" stop-color="#c4c8d0"/></linearGradient>
                <linearGradient id="hole" x1="0" y1="0" x2="1" y2="0"><stop offset="0" stop-color="#85898f"/><stop offset=".4" stop-color="#dcdfe2"/><stop offset="1" stop-color="#6e7278"/></linearGradient>
                <linearGradient id="holeG" x1="0" y1="0" x2="1" y2="0"><stop offset="0" stop-color="#57b800"/><stop offset=".35" stop-color="#80fb20"/><stop offset="1" stop-color="#3c8200"/></linearGradient>
                <linearGradient id="red" x1="0" y1="0" x2="1" y2=".5"><stop offset="0" stop-color="#8a0000"/><stop offset=".4" stop-color="#a80606"/><stop offset=".65" stop-color="#e82828"/><stop offset=".85" stop-color="#b00a0a"/></linearGradient>
                <linearGradient id="pinG" x1="0" y1="0" x2="1" y2=".4"><stop offset="0" stop-color="#888c88"/><stop offset=".3" stop-color="#6b706c"/><stop offset=".65" stop-color="#c9cfca"/><stop offset="1" stop-color="#6f746f"/></linearGradient>
                <linearGradient id="corner" x1="0" y1="0" x2="0" y2="1"><stop offset="0" stop-color="#4a9c00"/><stop offset=".5" stop-color="#7df02a"/><stop offset=".7" stop-color="#55b800"/><stop offset="1" stop-color="#62cc10"/></linearGradient>
                <linearGradient id="tube" x1="0" y1="0" x2="1" y2="0"><stop offset="0" stop-color="#5f646b"/><stop offset=".5" stop-color="#80858d"/><stop offset="1" stop-color="#666b73"/></linearGradient>
              </defs>
              <g stroke="#2f3a35" stroke-width="1" stroke-linejoin="round">
                <!-- mounting plate -->
                <path d="M1121 1267L1077 1344H1190z" fill="url(#tube)"/>
                <path d="M918 905L901 933Q900 938 904 943L1176 1344H1230L921 915z" fill="#7f7869"/>
                <path d="M918 905L901 933Q900 938 904 943L921 915z" fill="#8d8777"/>
                <path d="M921 915Q916 905 919 900Q924 893 940 897L1198 963C1224 971 1240 980 1253 998L1500 1344H1211z" fill="#8a8576"/>
                <!-- flange and rod -->
                <path d="M1182 1066L1170 1088C1164 1100 1174 1120 1192 1137C1222 1166 1256 1184 1291 1193L1330 1178L1230 1060z" fill="url(#rim)"/>
                <path d="M1180 1077C1179 1060 1190 1053 1212 1054C1240 1057 1264 1068 1300 1090L1360 1140L1328 1178C1290 1172 1250 1150 1222 1133C1198 1112 1183 1096 1180 1077z" fill="#757a81"/>
                <ellipse cx="1276" cy="1118" rx="56" ry="23" transform="rotate(38 1276 1118)" fill="#777c83"/>
                <ellipse cx="1205" cy="1072" rx="18" ry="8" transform="rotate(32 1205 1072)" fill="url(#hole)"/>
                <ellipse cx="1249" cy="1138" rx="18" ry="8" transform="rotate(32 1249 1138)" fill="url(#hole)"/>
                <ellipse cx="1343" cy="1164" rx="15" ry="7" transform="rotate(60 1343 1164)" fill="#c9ccd0"/>
                <path d="M1278 1038L1244 1103C1245 1122 1282 1144 1304 1139L1326 1103V1050z" fill="url(#rod)" stroke="none"/>
                <path d="M1244 1103C1245 1122 1282 1144 1304 1139" fill="none" stroke-dasharray="6 3"/>
                <ellipse cx="1318" cy="1293" rx="16" ry="7" transform="rotate(38 1318 1293)" fill="#bdb7a8"/>
                <!-- red push button with nut -->
                <path d="M1299 1218Q1293 1230 1306 1240C1325 1258 1350 1272 1365 1267L1372 1255z" fill="url(#red)"/>
                <path d="M1293 1190L1309 1180L1360 1190L1396 1220L1405 1240L1400 1250L1385 1257L1371 1258L1315 1233L1300 1217z" fill="#7f8a8a"/>
                <path d="M1315 1224C1335 1224 1360 1238 1373 1248L1371 1258C1350 1258 1330 1248 1315 1233z" fill="#89979a"/>
                <path d="M1293 1190L1298 1187C1306 1198 1314 1210 1317 1223L1315 1233L1300 1217z" fill="#74827f"/>
                <path d="M1373 1249C1382 1242 1396 1242 1404 1243L1400 1250L1385 1257L1371 1258z" fill="#aab5b4"/>
                <ellipse cx="1353" cy="1208" rx="54" ry="22" transform="rotate(36 1353 1208)" fill="#84918f"/>
                <path d="M1349 1141L1324 1178L1315 1196C1318 1212 1358 1238 1384 1235L1400 1212V1180z" fill="url(#red)"/>
                <path d="M1326 1174C1326 1192 1370 1218 1396 1218M1329 1172C1330 1186 1370 1212 1396 1213" fill="none" stroke="#5c0000"/>
                <!-- second bolt over black knob -->
                <ellipse cx="1424" cy="1326" rx="66" ry="30" transform="rotate(30 1424 1326)" fill="#050e19"/>
                <path d="M1366 1302Q1370 1287 1396 1290L1412 1300V1344H1384z" fill="#07121e"/>
                <path d="M1418 1248L1408 1272L1416 1286L1410 1318Q1424 1335 1440 1325L1462 1308L1490 1300L1450 1240z" fill="#7b827f"/>
                <path d="M1418 1248L1408 1272L1434 1297L1462 1308" fill="none"/>
                <path d="M1444 1290L1432 1330L1442 1336L1458 1308z" fill="#cfd5cd"/>
                <!-- green bracket -->
                <path d="M1372 983L1575 620L1614 670L1928 1133Q1940 1165 1923 1198L1842 1344H1616z" fill="#469200"/>
                <path d="M1600 630L1614 651L1943 1135L1928 1133L1614 670L1596 643z" fill="#4ca000"/>
                <path d="M1928 1133L1943 1135Q1956 1166 1938 1201L1923 1198Q1940 1165 1928 1133z" fill="url(#corner)"/>
                <path d="M1923 1198L1938 1201L1858 1344H1842z" fill="#92fb30"/>
                <path d="M1256 967L1247 982V993L1485 1344H1510L1264 985z" fill="#449000"/>
                <path d="M1259 985L1250 1001" fill="none"/>
                <path d="M1259 985C1252 972 1258 960 1270 961L1286 963L1367 985L1612 1344H1503z" fill="#4ea400"/>
                <path d="M1367 985L1372 983L1617 1344H1611z" fill="#66dc14"/>
                <ellipse cx="1328" cy="1026" rx="21" ry="9" transform="rotate(33 1328 1026)" fill="url(#holeG)"/>
                <!-- pin -->
                <path d="M1466 1196L1464 1206L1452 1218Q1442 1230 1460 1240Q1484 1254 1492 1249L1504 1222V1212z" fill="#4a9c00"/>
                <path d="M1464 1204L1452 1234Q1462 1248 1490 1250L1505 1219z" fill="url(#pinG)"/>
                <ellipse cx="1485" cy="1208" rx="23" ry="11" transform="rotate(33 1485 1208)" fill="#8e938f"/>
                <ellipse cx="1486" cy="1206" rx="19" ry="9" transform="rotate(33 1486 1206)" fill="#7d827f"/>
              </g>
              <!-- axis triad -->
              <path d="M390 1291L401 1271" stroke="#5a55e0" stroke-width="4"/>
              <path d="M404 1266l-9 11 9 5z" fill="#1e1e9a"/>
              <path d="M390 1291l-20-3-3-6 6-2z" fill="#3fd84a"/>
              <path d="M390 1291l-10-8-1-9 8 5z" fill="#d83434" stroke="#6a1010"/>
              <circle cx="390" cy="1292" r="3" fill="#fff"/>
              <g class="axis-text">
                <text x="406" y="1261" fill="#1c1cc8">Z</text>
                <text x="371" y="1271" fill="#c81c3c">X</text>
                <text x="353" y="1286" fill="#2fc84a">Y</text>
              </g>
            </svg>
          </div>
        </div>
      </div>

      <aside class="panel right">
        <div class="panel-head">工具<i class="tri"></i><svg class="i18"><use href="#i-pin"/></svg></div>
        <div class="lib-bar">
          <button><svg class="i22"><use href="#b-new"/></svg>新建</button>
          <button><svg class="i22"><use href="#b-open"/></svg>打开</button>
          <button><svg class="i22"><use href="#b-save"/></svg>保存</button>
          <button><svg class="i22"><use href="#b-close"/></svg>关闭</button>
        </div>
        <div class="search">
          <input type="text" placeholder="搜索..." aria-label="搜索图素" />
          <button class="clear" aria-label="清除"><svg class="i24"><use href="#i-redx"/></svg></button>
        </div>
        <div class="lib">
          <button><svg viewBox="0 0 48 48"><path d="M1 1h46v46H1z" fill="#f0eef4" stroke="#999"/><path d="M1 1h46v3H1z" fill="#9a98c8"/><path d="M3 9h22v28H3z" fill="#fff"/><path d="M25 9h9v27h-9z" fill="#cfcfdc"/><path d="M34 14h13M34 18h13M34 22h13M34 26h13M34 30h13" stroke="#ccc"/><path d="M25 10h22M6 6h14M24 6h2M7 13h4M7 16h8M7 19h10M7 22h7M7 26h8M7 29h9" stroke="#888"/><path d="M5 10v22" stroke="#833"/><path d="M1 38h46M2 40h13v6H2z" fill="none" stroke="#aaa"/></svg>BOM</button>
          <button><svg viewBox="0 0 48 48"><path d="M18 10l3-8 4 8 6-7 0 9 9-5-3 8 9-1-6 5 8 3-9 2 7 6-9 0 4 8-8-4 1 9-6-6-3 8-4-8-5 6 0-9-8 3 4-7-8-1 6-5-7-4 8-2-5-6 8 1-1-8z" fill="url(#steel)" stroke="#8a9694"/><circle cx="21" cy="23" r="10" fill="#fff" stroke="#5f6a69" stroke-width="2"/></svg>齿轮</button>
          <button><svg viewBox="0 0 48 48" fill="none" stroke-linecap="round"><path d="M3 13C12 2 30 0 33 5S12 18 8 22M8 24C20 12 38 8 38 15S14 30 12 34M13 35C26 22 45 18 44 26S18 40 16 42" stroke="#65706f" stroke-width="6"/><path d="M3 13C12 2 30 0 33 5S12 18 8 22M8 24C20 12 38 8 38 15S14 30 12 34M13 35C26 22 45 18 44 26S18 40 16 42" stroke="#dfe8e6" stroke-width="3"/></svg>弹簧</button>
          <button><svg viewBox="0 0 48 48"><path d="M3 26l32-12 11 2v13L14 45 4 40z" fill="#dfe5df" stroke="#c5ccc5"/><path d="M3 26l11 4 32-14-11-2z" fill="#c9d1ca"/><path d="M2 20l10-8v3l12-3-4 7-8 1-1 3zM25 13l6-7 7-1V2l8 1-7 7V8l-6 3z" fill="#2fae2f" stroke="#167016"/></svg>筋板</button>
          <button><svg viewBox="0 0 48 48"><path d="M1 2l17-1v8H1z" fill="#6d7676"/><path d="M5 9h11v17H5z" fill="#cfe3de"/><path d="M5 26h10v17l-2 2H6z" fill="#465052"/><ellipse cx="37" cy="7" rx="9" ry="6" fill="#5d6668"/><ellipse cx="37" cy="7" rx="4" ry="2" fill="#fff"/><path d="M30 23l10-1 7 6v9l-6 6-9-1-5-8z" fill="#8799a4" stroke="#465663"/><circle cx="37" cy="31" r="5" fill="#fff" stroke="#333" stroke-width="2"/></svg>紧固件</button>
          <button><svg viewBox="0 0 48 48"><path d="M15 10h32v22H15z" fill="#eef1ea"/><path d="M1 6l23-5h23l-10 9H10z" fill="#b5c4bd"/><path d="M1 34l30-8 16 8-31 11z" fill="none" stroke="#47708c"/><path d="M29 41V26h-3l6-14 6 14h-3v15z" fill="#21bb2c" stroke="#128a1a"/></svg>拉伸</button>
          <button><svg viewBox="0 0 48 48"><path d="M2 16L20 2h10l5 5 3 18 10 2-20 18-5 1-4-7-4-20-5-4z" fill="url(#steel)"/><path d="M2 16L20 2h10l5 5-18 14-4-5z" fill="#a9bdbf"/><path d="M21 37l18-13 8 2-20 18z" fill="#7f9496"/></svg>冷弯型钢</button>
          <button><svg viewBox="0 0 48 48"><path d="M1 4l22 5 24-4v5L28 17v16l18-3v4L24 46 2 36v-4l8 0V13L1 9z" fill="#b9bfb6" stroke="#8f968c"/><path d="M15 14l22-4v19l-17 7-5-3z" fill="#e3e7df"/></svg>热轧型钢</button>
          <button><svg viewBox="0 0 48 48"><path d="M1 2h26v20H1z" fill="#b9b9b0"/><path d="M9 2h18v20l-18-2z" fill="#a3a39c"/><path d="M29 2h16v18H29zM1 25h26v18l-18 3-8-2z" fill="#e6e8db"/><path d="M4 24l11-2 12 3-12 1z" fill="#444"/><path d="M30 25l5-1 5 6 2-2 2 12-12-5 3-1-6-6z" fill="#2bab38" stroke="#177a20"/></svg>阵列</button>
          <button><svg viewBox="0 0 48 48"><path d="M33 2c9 1 15 9 13 20C44 36 28 47 17 45 8 44 0 36 3 26 7 12 20 0 33 2z" fill="url(#steel)" stroke="#6f7670"/><ellipse cx="22" cy="21" rx="21" ry="16" transform="rotate(-45 22 21)" fill="#b1b6ae" stroke="#656c66"/><ellipse cx="22" cy="21" rx="17" ry="12" transform="rotate(-45 22 21)" fill="#d7dbd2" stroke="#555" stroke-width="3" stroke-dasharray="3 6"/><ellipse cx="22" cy="22" rx="11" ry="7" transform="rotate(-45 22 22)" fill="#fff" stroke="#9aa098" stroke-width="3"/></svg>轴承</button>
          <button><svg viewBox="0 0 48 48"><path d="M2 12L14 1l8 4 1 8-12 7-8-3z" fill="#858c8c"/><path d="M8 17l12-6 12 12-9 8z" fill="#ece9df"/><ellipse cx="25" cy="26" rx="8" ry="14" transform="rotate(40 25 26)" fill="#9baaaa" stroke="#6b7878"/><path d="M16 22l10-7 5 5-10 9z" fill="#f0efe8"/><path d="M28 36l8-7 10 4-1 10-9 3-7-3z" fill="#7f8988"/><circle cx="36" cy="37" r="4" fill="#222"/><path d="M34 5l8 2-2 2 6 9-3 1-6-9-2 2zM1 32l3-1 7 6 2-2 4 8-9-2 2-2z" fill="#2fae2f" stroke="#177a20"/></svg>装配</button>
          <button><svg viewBox="0 0 48 48"><path d="M14 16h24v15l-4 0v14l-9 2-5-15-6-2z" fill="#c6d1d1"/><path d="M20 18h8v24l-3 4-5-14z" fill="#e8f0f0"/><path d="M14 2l34-1-11 19-37-4z" fill="#23264f"/><ellipse cx="25" cy="9" rx="13" ry="5" fill="#dfe8e6" stroke="#9aa"/></svg>自定义孔</button>
        </div>
        <div class="lib-foot">
          <button class="back" disabled><svg class="i24"><use href="#i-back"/></svg>返回</button>
          <button class="more-lib">更多图素库</button>
          <button class="stub" aria-label="展开"></button>
        </div>
        <div class="panel-tabs">
          <button class="active"><svg class="i18"><use href="#i-padlock"/></svg>工具</button>
          <button><svg class="i18"><use href="#i-padlock"/></svg>图素</button>
          <button><svg class="i18"><use href="#i-padlock"/></svg>钣金</button>
          <button class="more" aria-label="更多图素"><i class="bar"></i><i class="tri"></i></button>
        </div>
      </aside>
    </main>

    <footer class="status">
      <span class="hint">帮助,按F1键</span>
      <span class="dims">视图尺寸: 1936 x 1091</span>
      <span class="units"><svg class="i20"><use href="#s-ruler"/></svg><b>单位:</b></span>
      <span class="unit-val">mm, deg</span>
      <div class="view-tools">
        <button aria-label="缩放"><svg class="i24"><use href="#s-zoom"/></svg></button>
        <button aria-label="窗口缩放"><svg class="i24"><use href="#s-zoom-win"/></svg><i class="tri"></i></button>
        <button aria-label="视向"><svg class="i24"><use href="#s-cube-y"/></svg><i class="tri"></i></button>
        <button aria-label="投影"><svg class="i24"><use href="#s-cube"/></svg><i class="tri"></i></button>
        <button aria-label="平移"><svg class="i24"><use href="#s-move"/></svg><i class="tri"></i></button>
        <button aria-label="剖视"><svg class="i24"><use href="#s-wedge"/></svg></button>
        <button aria-label="显示"><svg class="i24"><use href="#s-glass"/></svg><i class="tri"></i></button>
        <button aria-label="渲染"><svg class="i24"><use href="#s-cube"/></svg><i class="tri"></i></button>
        <button aria-label="旋转" disabled><svg class="i24"><use href="#s-rot"/></svg></button>
        <button aria-label="选择" class="pressed"><svg class="i24"><use href="#s-arrow"/></svg></button>
        <button aria-label="框选"><svg class="i24"><use href="#s-pick"/></svg></button>
      </div>
      <div class="combo c1"><select aria-label="拾取层" disabled><option>缺省</option></select><i class="tri"></i></div>
      <div class="combo c2"><select aria-label="拾取过滤"><option>任意</option></select><i class="tri"></i></div>
      <div class="combo c3"><select aria-label="配置"><option>Default</option></select><i class="tri"></i></div>
      <button class="cfg" aria-label="配置树"><svg class="i24"><use href="#s-tree"/></svg></button>
    </footer>

    <div class="taskbar">
      <div class="watermark">咖谜社区 | CAXA数码大方</div>
      <button class="start" aria-label="开始"><svg viewBox="0 0 36 36"><path d="M6 8l10-1v10H6zM18 7l12-2v12H18zM6 19h10v10L6 28zM18 19h12v12l-12-2z" fill="#fff"/></svg></button>
      <button aria-label="搜索"><svg viewBox="0 0 36 36"><circle cx="20" cy="14" r="9" fill="none" stroke="#fff" stroke-width="2"/><path d="M14 21L6 30" stroke="#fff" stroke-width="2"/></svg></button>
      <button aria-label="文件资源管理器"><svg viewBox="0 0 36 36"><path d="M2 5h12l3 4H2z" fill="#d99e1c"/><path d="M2 8h32v22H2z" fill="#ffd667"/><path d="M8 19h20v12h-5v-5H13v5H8z" fill="#3b97dd"/></svg></button>
      <button aria-label="VMware"><svg viewBox="0 0 36 36" fill="none" stroke-width="6"><path d="M13 3h17q3 0 3 3v16q0 3-3 3H16q-3 0-3-3z" stroke="#1595d3"/><path d="M6 12h15q3 0 3 3v15q0 3-3 3H6q-3 0-3-3V15q0-3 3-3z" stroke="#f08a1c"/><path d="M13 8v12" stroke="#1595d3"/></svg></button>
      <button aria-label="截图工具"><svg viewBox="0 0 36 36"><ellipse cx="10" cy="20" rx="9" ry="5" fill="#a59a9c"/><ellipse cx="16" cy="10" rx="15" ry="8" transform="rotate(-22 16 10)" fill="#fff" stroke="#c8404a" stroke-width="2"/><path d="M10 6l13 17M21 3l-2 19" stroke="#999" stroke-width="2"/><ellipse cx="22" cy="29" rx="3" ry="5" fill="none" stroke="#3a8fc8" stroke-width="2"/><ellipse cx="29" cy="23" rx="5" ry="3" transform="rotate(40 29 23)" fill="none" stroke="#3a8fc8" stroke-width="2"/></svg></button>
      <button aria-label="计算器"><svg viewBox="0 0 36 36"><path d="M4 0h28v36H4z" fill="#66788a"/><path d="M7 3h22v7H7z" fill="#5cc6ec"/><path d="M7 13h6v5H7zM15 13h6v5h-6zM23 13h6v5h-6zM7 21h6v5H7zM15 21h6v5h-6zM7 29h6v5H7zM15 29h6v5h-6z" fill="#e4e9ee"/><path d="M23 20h6v14h-6z" fill="#1f5a98"/></svg></button>
      <button class="run" aria-label="QQ音乐"><svg viewBox="0 0 36 36"><circle cx="18" cy="18" r="18" fill="#ffe21a"/><path d="M16 4c4 3 8 0 12-3-1 6-3 8-7 8l3 16c0 5-4 9-8 8-6-1-6-9 0-10l3-1z" fill="#1fb574"/></svg></button>
      <button aria-label="优酷"><svg viewBox="0 0 36 36"><rect width="36" height="36" rx="7" fill="#fff"/><path d="M12 6l10 7-9 8" fill="none" stroke="#ff2d7a" stroke-width="8" stroke-linejoin="round" stroke-linecap="round"/><path d="M13 21l6-5" stroke="#1fb9f0" stroke-width="8" stroke-linecap="round"/><text x="5" y="33" class="youku">YOUKU</text></svg></button>
      <button class="run" aria-label="QQ浏览器"><svg viewBox="0 0 36 36"><circle cx="18" cy="17" r="14" fill="none" stroke="#2c9df4" stroke-width="7"/><path d="M16 34c-4-5 1-9 5-8 2-5 9-4 9 1 6 1 5 7 0 8H18z" fill="#fff"/></svg></button>
      <button aria-label="腾讯视频"><svg viewBox="0 0 36 36"><path d="M5 2L1 30l4 3 20-14z" fill="#ff8a1e"/><path d="M8 1l-1 33 27-14q3-2 0-4z" fill="#29a5ee"/><path d="M4 7v22l22-9q2-2 0-4z" fill="#74ca28"/><path d="M11 12v12l11-6z" fill="#fff"/></svg></button>
      <button class="run current" aria-label="CAXA 3D"><svg viewBox="0 0 24 24"><use href="#i-logo"/></svg></button>
      <div class="tray">
        <svg viewBox="0 0 24 24"><path d="M3 16l9-8 9 8" fill="none" stroke="#fff" stroke-width="2"/></svg>
        <svg viewBox="0 0 24 24"><path d="M3 9h4l5-5v16l-5-5H3zM15 9q3 3 0 6M18 6q5 6 0 12" fill="none" stroke="#fff"/></svg>
        <svg viewBox="0 0 24 24"><path d="M6 5h17v12H6M1 3h5v12H1zM14 17v3M9 21h10M3 15v6h4" fill="none" stroke="#fff"/></svg>
        <span class="ime">中</span>
        <span class="wubi">五</span>
        <div class="clock"><time>14:04</time><time>2021/1/25</time></div>
      </div>
    </div>

    <div class="dialog" role="dialog" aria-label="错误">
      <div class="dialog-body">
        <button class="dialog-x" aria-label="关闭"><svg viewBox="0 0 24 24"><path d="M3 3l18 18M21 3L3 21" stroke="#222"/></svg></button>
        <p>发生错误,详细信息 = 库没有注册。 (Exception from HRESULT: 0x8002801D<br>(TYPE_E_LIBNOTREGISTERED))</p>
      </div>
      <div class="dialog-foot"><button>确定</button></div>
    </div>
    <div class="subtitle">还能不能相见</div>
  </body>
</html>
```
FILE: styles.css
```css
* {
  box-sizing: border-box;
}
body {
  margin: 0;
  height: 100vh;
  display: flex;
  flex-direction: column;
  overflow: hidden;
  font-family: "Open Sans", "Noto Sans CJK SC", sans-serif;
  font-size: 17px;
  line-height: 24px;
  color: #333;
  background: #e6e6e6;
}
button,
input,
select {
  font: inherit;
  color: inherit;
  margin: 0;
  padding: 0;
  border: 0;
  border-radius: 0;
  background: none;
}
button {
  display: flex;
  align-items: center;
  justify-content: center;
  white-space: nowrap;
}
h1,
h2,
p,
ul {
  margin: 0;
  padding: 0;
  font-size: 17px;
  font-weight: normal;
}
svg {
  display: block;
  flex: none;
}
.sprite {
  position: absolute;
  width: 0;
  height: 0;
}
.i18 { width: 18px; height: 18px; }
.i20 { width: 20px; height: 20px; }
.i22 { width: 22px; height: 22px; }
.i24 { width: 24px; height: 24px; }
.tri {
  border: 4px solid transparent;
  border-top: 6px solid #444;
  border-bottom: 0;
}
.bar {
  width: 8px;
  height: 2px;
  background: #fff;
}
.more {
  flex-direction: column;
  gap: 3px;
}

/* title bar */
.titlebar {
  display: flex;
  height: 48px;
  background: #2b579a;
  color: #dbe4f1;
}
.quick {
  display: flex;
  height: 38px;
}
.quick button {
  width: 33px;
}
.quick .app-logo {
  width: 31px;
}
.quick .lit {
  width: 30px;
  background: #3268b3;
}
.quick .more {
  width: 24px;
}
.quick .tri {
  border-top-color: #fff;
}
.titlebar h1 {
  flex: 1;
  text-align: center;
  line-height: 46px;
  font-family: "Noto Sans CJK SC", sans-serif;
}
.win-ctl {
  display: flex;
  height: 34px;
}
.win-ctl button {
  width: 55px;
  color: #b3c4de;
}
.win-ctl svg {
  width: 20px;
}

/* ribbon tabs */
.tabs {
  display: flex;
  height: 42px;
  background: #2b579a;
  color: #fff;
}
.tabs > button {
  padding: 0 21px;
}
.tabs > .long {
  padding: 0 23px;
}
.tabs > .menu {
  padding: 0 36px;
}
.tabs > .active {
  background: #fdfdfd;
  color: #2b67b8;
}
.cmd-search {
  display: flex;
  align-items: center;
  gap: 14px;
  padding-left: 28px;
}
.cmd-search input {
  width: 160px;
}
.cmd-search input::placeholder {
  color: #b5c4dc;
  opacity: 1;
}
.tabs-right {
  display: flex;
  gap: 9px;
  margin-left: auto;
  padding-right: 4px;
}
.tabs-right button {
  gap: 9px;
}
.tabs-right .tri {
  border-width: 5px 3px 0;
  border-top-color: #fff;
}
.tabs-right svg.i24 {
  width: 22px;
}

/* ribbon */
.ribbon {
  display: flex;
  height: 134px;
  background: #fdfdfd;
  border-bottom: 1px solid #c8c8c8;
}
.group {
  display: flex;
  flex-direction: column;
  padding: 0 6px;
  margin: 3px 0;
  border-right: 1px solid #d4d4d4;
}
.group.first {
  padding: 0 7px;
}
.group.wide {
  padding: 0 8px;
}
.tools {
  display: flex;
  justify-content: center;
  gap: 5px;
  height: 103px;
}
.group h2 {
  text-align: center;
  color: #666;
}
.big {
  flex-direction: column;
  justify-content: flex-start;
  min-width: 52px;
  padding: 6px 2px 0;
}
.big svg {
  width: 44px;
  height: 44px;
  margin-bottom: 6px;
}
.big .tri {
  border-width: 7px 6px 0;
  margin-top: 4px;
}
.col {
  display: flex;
  flex-direction: column;
  padding-top: 2px;
}
.col button {
  justify-content: flex-start;
  gap: 4px;
  height: 30px;
}
.col svg {
  width: 24px;
  height: 24px;
}
.col .tri {
  margin-left: 2px;
}
.col button:disabled {
  color: #aaa;
}

/* work area */
.work {
  flex: 1;
  display: flex;
  min-height: 0;
}
.docs {
  flex: 1;
  display: flex;
  flex-direction: column;
  min-width: 0;
}
.doc-tabs {
  display: flex;
  height: 30px;
  padding-top: 3px;
}
.doc-tab {
  position: relative;
  z-index: 0;
  width: 176px;
  padding-left: 46px;
  gap: 12px;
  color: #444;
  background: #999;
  clip-path: polygon(0 100%, 28px 0, 100% 0, 100% 100%);
}
.doc-tab::before {
  content: "";
  position: absolute;
  inset: 1px 1px 0 1px;
  z-index: -1;
  background: #fdfdfd;
  clip-path: polygon(0 100%, 28px 0, 100% 0, 100% 100%);
}
.doc-list {
  margin-left: auto;
  width: 25px;
}
.doc-list .tri,
.panel-head .tri {
  border-width: 8px 6px 0;
  border-top-color: #666;
}
.doc-body {
  flex: 1;
  display: flex;
  min-height: 0;
}
.panel {
  display: flex;
  flex-direction: column;
  background: #e6e6e6;
}
.panel.left {
  width: 336px;
  padding-right: 6px;
  border-top: 1px solid #ccc;
}
.panel.right {
  width: 290px;
  padding-left: 6px;
}
.panel-head {
  display: flex;
  align-items: center;
  gap: 12px;
  height: 34px;
  padding: 0 6px 0 4px;
  color: #555;
}
.panel-head .tri {
  margin-left: auto;
}
.search {
  display: flex;
  height: 29px;
  background: #fff;
}
.search input {
  flex: 1;
  min-width: 0;
  padding-bottom: 6px;
}
.search input::placeholder {
  color: #555;
  opacity: 1;
}
.search button {
  width: 28px;
  margin: 0 1px 1px 0;
}
.search .clear {
  background: #f0ede0;
  border: 1px solid #aaa;
}
.search .opt {
  width: 30px;
  background: #f4f4f4;
}
.tree-box {
  flex: 1;
  display: flex;
  flex-direction: column;
  min-height: 0;
  overflow: hidden;
  border: 1px solid #777;
  background: #fff;
  color: #000;
  font-size: 18px;
  line-height: 26px;
}
.root {
  display: flex;
  align-items: center;
  gap: 6px;
  height: 27px;
  padding: 1px 0 0 4px;
  white-space: nowrap;
  overflow: hidden;
}
.tree {
  list-style: none;
  font-size: 18px;
}
.tree li {
  position: relative;
  display: flex;
  align-items: center;
  height: 26px;
  padding-left: 31px;
}
/* dotted branch lines */
.tree li::before {
  content: "";
  position: absolute;
  left: 16px;
  top: 0;
  width: 14px;
  height: 13px;
  border-left: 1px dotted #777;
  border-bottom: 1px dotted #777;
}
.tree li:not(:last-child)::after {
  content: "";
  position: absolute;
  left: 16px;
  top: 13px;
  height: 13px;
  border-left: 1px dotted #777;
}
/* expander box */
.tree .exp > span::before {
  content: "";
  position: absolute;
  z-index: 1;
  left: 10px;
  top: 7px;
  width: 13px;
  height: 13px;
  border: 1px solid #999;
  background:
    linear-gradient(#3c5a96, #3c5a96) center / 9px 1px no-repeat,
    linear-gradient(#3c5a96, #3c5a96) center / 1px 9px no-repeat,
    #f4f4f4;
}
.tree span {
  margin-left: 3px;
  padding: 0 2px;
}
.tree .selected span {
  background: #0078d7;
  color: #fff;
}
.dim { --fill: #c4c4c4; --line: #aaa; }
.dark { --fill: #444; }
.blue { --fill: #3e84d6; }
.hscroll {
  display: flex;
  height: 25px;
  margin-top: auto;
  background: #f0f0f0;
}
.hscroll svg {
  width: 27px;
  height: 24px;
}
.track {
  flex: 1;
}
.thumb {
  width: 76%;
  height: 24px;
  background: #cdcdcd;
}
.panel-tabs {
  display: flex;
  height: 31px;
  padding-bottom: 1px;
  border-bottom: 1px solid #ccc;
  color: #444;
}
.panel-tabs button {
  gap: 5px;
  padding: 0 7px;
}
.panel-tabs .active {
  background: #fff;
  border-right: 1px solid #999;
  border-bottom: 1px solid #999;
}

/* 3d view */
.viewport {
  flex: 1;
  min-width: 0;
  overflow: hidden;
  background: linear-gradient(#596ba5, #708cb4 35%, #88aac4 66%, #a5d1d6);
}
.scene {
  width: 100%;
  height: 100%;
}
.axis-text {
  font-size: 14px;
}

/* library */
.lib-bar {
  display: grid;
  grid-template-columns: repeat(4, 1fr);
  gap: 2px;
  height: 30px;
  padding: 1px;
}
.lib-bar button {
  justify-content: flex-end;
  gap: 2px;
  border: 1px solid #adadad;
  background: #e1e1e1;
}
.right .search {
  padding-left: 1px;
}
.lib {
  flex: 1;
  display: grid;
  grid-template-columns: repeat(2, 113px);
  grid-auto-rows: 113px;
  border: 1px solid #777;
  background: #fff;
  color: #000;
  font-size: 18px;
}
.lib button {
  flex-direction: column;
  justify-content: flex-start;
  gap: 4px;
  padding-top: 3px;
}
.lib svg {
  width: 48px;
  height: 48px;
}
.lib-foot {
  display: flex;
  gap: 2px;
  height: 30px;
  padding: 1px 0 1px 1px;
}
.lib-foot button {
  border: 1px solid #adadad;
  background: #e1e1e1;
}
.lib-foot .back {
  width: 88px;
  gap: 10px;
  background: #ccc;
  color: #888;
}
.lib-foot .more-lib {
  flex: 1;
}
.lib-foot .stub {
  width: 10px;
}
.right .panel-tabs button {
  gap: 12px;
  padding: 0 6px;
}
.right .panel-tabs .more {
  margin-left: auto;
  gap: 3px;
}
.right .bar {
  width: 10px;
  background: #666;
}
.right .more .tri {
  border-width: 6px 5px 0;
}

/* status bar */
.status {
  display: flex;
  align-items: center;
  height: 36px;
  background: #fdfdfd;
}
.hint {
  flex: 1;
  padding-left: 2px;
}
.dims {
  margin-right: 10px;
}
.units {
  display: flex;
  align-items: center;
  gap: 6px;
}
.unit-val {
  margin: 0 8px 0 12px;
}
.view-tools {
  display: flex;
  height: 30px;
}
.view-tools button {
  gap: 8px;
  padding: 0 4px;
}
.view-tools .tri {
  border-width: 5px 3px 0;
}
.view-tools .pressed {
  background: #cdcdcd;
}
.combo {
  position: relative;
  height: 28px;
  border: 1px solid #adadad;
}
.combo select {
  width: 100%;
  height: 100%;
  appearance: none;
  padding-left: 2px;
  color: #000;
  opacity: 1;
}
.combo .tri {
  position: absolute;
  right: 6px;
  top: 11px;
  border-width: 5px 3px 0;
  border-top-color: #666;
  pointer-events: none;
}
.c1 {
  width: 131px;
  background: #e1e1e1;
}
.c1 select {
  color: #999;
}
.c1 .tri {
  border-top-color: #aaa;
}
.c2 { width: 208px; }
.c3 { width: 268px; }
.cfg {
  width: 34px;
}

/* windows taskbar */
.taskbar {
  position: relative;
  display: flex;
  height: 60px;
  background: linear-gradient(90deg, #2b282c 80%, #3b2f2b 88%, #322c25 96%, #2a2a20);
}
.taskbar button {
  width: 75px;
}
.taskbar .start {
  width: 72px;
}
.taskbar button svg {
  width: 36px;
  height: 36px;
}
.taskbar .run {
  border-bottom: 4px solid #76b0e8;
  padding-top: 4px;
  width: 61px;
  margin: 0 7px;
}
.taskbar .current {
  width: 73px;
  margin: 0 1px;
  background: #545155;
}
.youku {
  font: bold 7px "Liberation Sans", sans-serif;
  fill: #e0307c;
}
.tray {
  position: relative;
  display: flex;
  align-items: center;
  gap: 14px;
  margin-left: auto;
  margin-right: 5px;
  padding-right: 13px;
  border-right: 1px solid #77776c;
  color: #fff;
  font-size: 20px;
}
.tray svg {
  width: 24px;
  height: 24px;
}
.wubi {
  width: 24px;
  text-align: center;
  background: #2f8df0;
  border-radius: 4px;
}
.clock {
  display: flex;
  flex-direction: column;
  align-items: center;
  gap: 4px;
  padding-left: 12px;
}
.watermark {
  position: absolute;
  right: 8px;
  top: 14px;
  font-size: 22px;
  line-height: 28px;
  font-weight: bold;
  font-style: italic;
  color: rgba(50, 46, 60, 0.6);
  -webkit-text-stroke: 1px rgba(190, 190, 205, 0.6);
}

/* error dialog */
.dialog {
  position: absolute;
  left: 50%;
  top: 562px;
  width: 666px;
  transform: translateX(-50%);
  border: 1px solid #444;
  background: #fff;
  color: #000;
  font-family: Roboto, "Noto Sans CJK SC", sans-serif;
  box-shadow: 0 6px 20px rgba(0, 0, 0, 0.45);
}
.dialog-body {
  position: relative;
  height: 170px;
  padding: 84px 18px 0;
}
.dialog-body p {
  line-height: 23px;
}
.dialog-x {
  position: absolute;
  right: 14px;
  top: 11px;
}
.dialog-x svg {
  width: 20px;
  height: 20px;
}
.dialog-foot {
  display: flex;
  justify-content: flex-end;
  height: 75px;
  padding: 16px 27px;
  background: #f0f0f0;
}
.dialog-foot button {
  width: 124px;
  height: 38px;
  border: 2px solid #0f6fbd;
  outline: 1px dotted #222;
  outline-offset: -3px;
  background: #e1e1e1;
}

/* video caption */
.subtitle {
  position: absolute;
  left: 50%;
  bottom: 84px;
  padding-right: 4px;
  transform: translateX(-50%);
  font-family: "Noto Sans CJK SC", sans-serif;
  font-size: 54px;
  line-height: 58px;
  font-weight: 500;
  color: transparent;
  background: linear-gradient(#f5e88a, #f4e02c 55%, #d8c81c);
  -webkit-background-clip: text;
  background-clip: text;
  filter: drop-shadow(2px 0 0 #222) drop-shadow(-1px 0 0 #222) drop-shadow(0 2px 0 #222) drop-shadow(0 -1px 0 #222);
}
```
